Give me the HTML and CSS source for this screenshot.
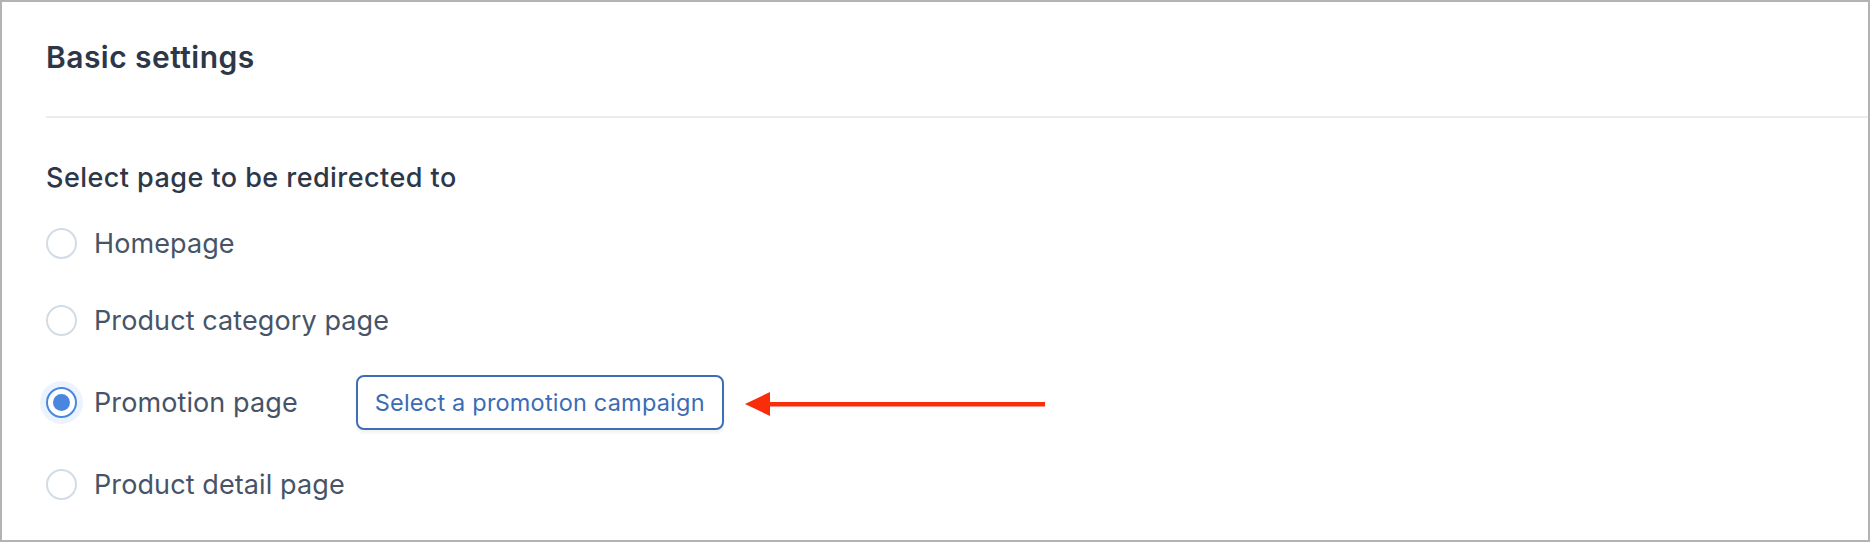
FILE: index.html
```html
<!DOCTYPE html>
<html lang="en">
<head>
<meta charset="utf-8">
<title>Basic settings</title>
<link rel="stylesheet" href="styles.css">
</head>
<body>
<div class="frame">
  <div class="header">
    <h2 class="title">Basic settings</h2>
  </div>
  <div class="section">
    <div class="label">Select page to be redirected to</div>
    <div class="options">
      <label class="option">
        <span class="radio"></span>
        <span class="text">Homepage</span>
      </label>
      <label class="option">
        <span class="radio"></span>
        <span class="text">Product category page</span>
      </label>
      <label class="option option-promo">
        <span class="radio checked"></span>
        <span class="text">Promotion page</span>
        <span class="btn-wrap">
          <button class="btn" type="button">Select a promotion campaign</button>
          <span class="arrow">
            <svg width="300" height="26" viewBox="0 0 300 26">
              <polygon points="0,13 25,1 25,25" fill="#f92d0a"/>
              <rect x="22" y="11" width="278" height="4.5" fill="#f92d0a"/>
            </svg>
          </span>
        </span>
      </label>
      <label class="option">
        <span class="radio"></span>
        <span class="text">Product detail page</span>
      </label>
    </div>
  </div>
</div>
</body>
</html>
```

FILE: styles.css
```css
* { box-sizing: border-box; }
html, body { margin: 0; padding: 0; background: #fff; }
body {
  font-family: Inter, "Noto Sans", "Liberation Sans", sans-serif;
  width: 1870px;
  height: 542px;
  overflow: hidden;
}
.frame {
  width: 1870px;
  height: 542px;
  border: 2px solid #b3b3b3;
  background: #fff;
}
.header {
  margin-left: 44px;
  height: 116px;
  border-bottom: 2px solid #ececec;
  display: flex;
  align-items: center;
  padding-bottom: 4px;
}
.title {
  margin: 0;
  font-size: 30px;
  font-weight: 600;
  color: #2d3748;
  letter-spacing: 0.45px;
}
.section {
  padding-left: 44px;
  padding-top: 42px;
}
.label {
  font-size: 27px;
  font-weight: 500;
  color: #2d3748;
  line-height: 36px;
  letter-spacing: 0.45px;
}
.options {
  display: flex;
  flex-direction: column;
  margin-top: 9px;
}
.option {
  display: flex;
  align-items: center;
  height: 77px;
}
.option-promo { height: 87px; }
.radio {
  width: 31px;
  height: 31px;
  border-radius: 50%;
  border: 2px solid #d2dce7;
  background: #fff;
  flex: none;
  display: flex;
  align-items: center;
  justify-content: center;
}
.radio.checked {
  border-color: #4a86e0;
  box-shadow: 0 0 0 6px #ebf4fe;
}
.radio.checked::after {
  content: "";
  width: 17px;
  height: 17px;
  border-radius: 50%;
  background: #4a86e0;
}
.text {
  margin-left: 17px;
  font-size: 27px;
  color: #475467;
  font-weight: 400;
  letter-spacing: 0.1px;
}
.btn-wrap {
  position: relative;
  margin-left: 58px;
  display: flex;
  align-items: center;
}
.btn {
  height: 55px;
  width: 368px;
  border: 2px solid #3d6fb6;
  border-radius: 8px;
  background: #fff;
  color: #3b6cb4;
  font-family: Inter, "Noto Sans", "Liberation Sans", sans-serif;
  font-size: 23.5px;
  font-weight: 400;
  letter-spacing: 0.2px;
  padding: 0;
  box-shadow: 0 3px 3px rgba(0, 0, 0, 0.05);
  cursor: pointer;
}
.arrow {
  position: absolute;
  left: 389px;
  top: 50%;
  margin-top: -12px;
  line-height: 0;
}
```
